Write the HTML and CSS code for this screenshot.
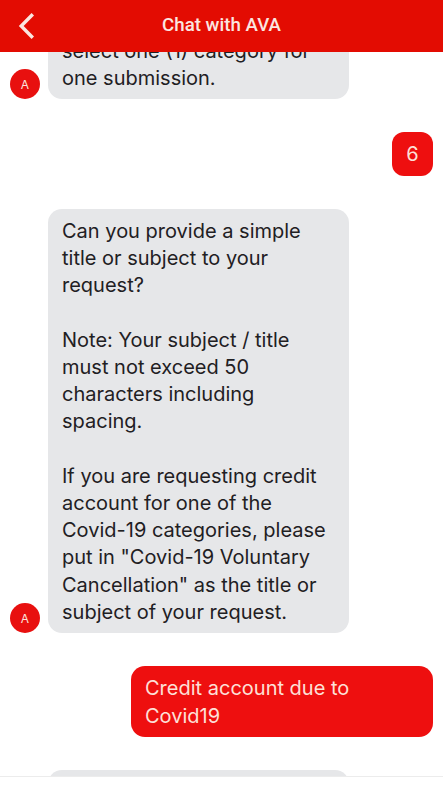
FILE: index.html
```html
<!DOCTYPE html>
<html lang="en">
<head>
<meta charset="utf-8">
<title>Chat with AVA</title>
<link rel="stylesheet" href="styles.css">
</head>
<body>
<div class="app">
  <header class="topbar">
    <svg class="back" width="18" height="28" viewBox="0 0 18 28" aria-hidden="true"><path d="M14.6 3.5 L4.2 14 L14.6 24.5" fill="none" stroke="#fbe6e0" stroke-width="3.4" stroke-linecap="square"/></svg>
    <h1 class="title">Chat with AVA</h1>
  </header>
  <main class="log">
    <div class="row bot first">
      <div class="avatar">A</div>
      <div class="bubble grey">select one (1) category for<br>one submission.</div>
    </div>
    <div class="row user">
      <div class="bubble red short">6</div>
    </div>
    <div class="row bot">
      <div class="avatar">A</div>
      <div class="bubble grey">Can you provide a simple<br>title or subject to your<br>request?<br><br>Note: Your subject / title<br>must not exceed 50<br>characters including<br>spacing.<br><br>If you are requesting credit<br>account for one of the<br>Covid-19 categories, please<br>put in "Covid-19 Voluntary<br>Cancellation" as the title or<br>subject of your request.</div>
    </div>
    <div class="row user">
      <div class="bubble red wide">Credit account due to<br>Covid19</div>
    </div>
    <div class="row bot">
      <div class="avatar-gap"></div>
      <div class="bubble grey">&nbsp;</div>
    </div>
  </main>
  <footer class="composer"></footer>
</div>
</body>
</html>
```
FILE: styles.css
```css
* { box-sizing: border-box; }
html, body { margin: 0; padding: 0; background: #fff; }
.app {
  width: 443px;
  height: 791px;
  display: flex;
  flex-direction: column;
  overflow: hidden;
  font-family: Inter, "Liberation Sans", sans-serif;
}
.topbar {
  flex: 0 0 52px;
  background: #e30c02;
  display: flex;
  align-items: center;
  justify-content: center;
  position: relative;
  z-index: 2;
}
.back { position: absolute; left: 17px; top: 12px; }
.title {
  margin: 0 0 3px;
  font: 500 18.7px Roboto, sans-serif;
  color: #fbe6e0;
}
.log {
  flex: 1;
  min-height: 0;
  overflow: hidden;
  display: flex;
  flex-direction: column;
  gap: 33.4px;
  padding: 0 10px;
}
.row { display: flex; align-items: flex-end; flex: none; }
.row.bot { gap: 8px; }
.row.user { justify-content: flex-end; }
.row.first { margin-top: -23.4px; }
.bubble {
  font-size: 20px;
  line-height: 27.2px;
  padding: 9px 14px 7px;
  border-radius: 14px;
  white-space: nowrap;
}
.grey { width: 301px; background: #e6e7e9; color: #1f2023; }
.red { background: #ee0f0f; color: #fde0d8; }
.short { width: 41px; padding: 9px 0 7px; text-align: center; border-radius: 12px; }
.wide { width: 302px; }
.avatar {
  width: 30px;
  height: 30px;
  border-radius: 50%;
  background: #e8100f;
  color: #fbe3dd;
  font-size: 12px;
  display: flex;
  align-items: center;
  justify-content: center;
  flex: none;
}
.avatar-gap { width: 30px; flex: none; }
.composer {
  flex: 0 0 15px;
  background: #fff;
  border-top: 1px solid #ececec;
  position: relative;
  z-index: 2;
}
```
